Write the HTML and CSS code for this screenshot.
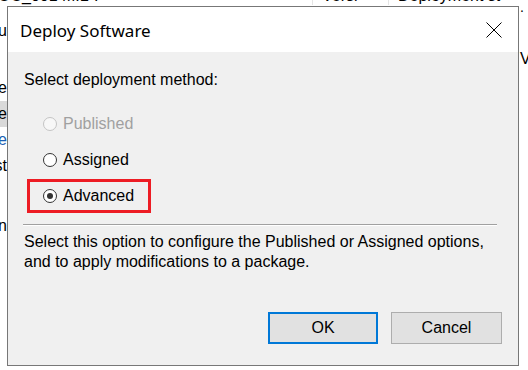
FILE: index.html
```html
<!DOCTYPE html>
<html lang="en">
<head>
    <meta charset="UTF-8">
    <meta name="viewport" content="width=device-width, initial-scale=1.0">
    <title>Deploy Software</title>
    <link rel="stylesheet" href="styles.css">
</head>
<body>
    <div class="desktop">
        <!-- the console window behind the dialog -->
        <div class="backdrop">
            <div class="back-head">
                <span class="back-name">OC_001 MIL</span>
                <span class="back-dots">.</span>
                <span class="back-col">Versi</span>
                <span class="back-col wide">Deployment st</span>
            </div>
            <div class="back-side">
                <div class="back-row" style="margin-top: 11px">Nu</div>
                <div class="back-row" style="margin-top: 31px">Locale</div>
                <div class="back-row selected">Store</div>
                <div class="back-row link">Se</div>
                <div class="back-row">Dist</div>
                <div class="back-row" style="margin-top: 34px">Un</div>
            </div>
            <div class="back-right">
                <span class="back-dot">.</span>
                <span class="back-v">V</span>
            </div>
        </div>

        <div class="dialog">
            <div class="titlebar">
                <span class="title">Deploy Software</span>
                <svg class="close" width="16" height="16" viewBox="0 0 16 16">
                    <path d="M0.5 0.5 L15.5 15.5 M15.5 0.5 L0.5 15.5" stroke="#000" stroke-width="1" fill="none"/>
                </svg>
            </div>
            <div class="content">
                <div class="prompt">Select deployment method:</div>
                <div class="options">
                    <label class="option disabled"><span class="radio"></span>Published</label>
                    <label class="option"><span class="radio"></span>Assigned</label>
                    <label class="option highlight"><span class="radio checked"></span>Advanced</label>
                </div>
                <div class="separator"></div>
                <p class="description">Select this option to configure the Published or Assigned options,<br>and to apply modifications to a package.</p>
                <div class="buttons">
                    <button class="btn default">OK</button>
                    <button class="btn">Cancel</button>
                </div>
            </div>
        </div>
    </div>
</body>
</html>
```

FILE: styles.css
```css
* {
    box-sizing: border-box;
}

body {
    margin: 0;
    background: #fff;
    font-family: "Liberation Sans", Arial, sans-serif;
    font-size: 16px;
    color: #000;
}

.desktop {
    position: relative;
    width: 528px;
    height: 370px;
    overflow: hidden;
}

/* window behind */
.backdrop {
    position: absolute;
    inset: 0;
    overflow: hidden;
}

.back-head {
    display: flex;
    align-items: flex-end;
    height: 20px;
    margin-top: -15px;
    white-space: nowrap;
}

.back-name {
    margin-left: -2px;
    width: 96px;
}

.back-dots {
    width: 218px;
}

.back-col {
    border-left: 1px solid #e5e5e5;
    padding-left: 9px;
    width: 76px;
}

.back-col.wide {
    width: 140px;
}

.back-side {
    display: flex;
    flex-direction: column;
    width: 7px;
    margin-top: 2px;
}

.back-row {
    display: flex;
    justify-content: flex-end;
    height: 26px;
    line-height: 26px;
    white-space: nowrap;
}

.back-row.selected {
    background: #d9d9d9;
}

.back-row.link {
    color: #1a5fb4;
}

.back-right {
    position: absolute;
    left: 519px;
    top: 0;
    display: flex;
    flex-direction: column;
    padding-left: 1px;
}

.back-dot {
    line-height: 14px;
    font-size: 14px;
}

.back-v {
    margin-top: 36px;
}

/* dialog */
.dialog {
    position: absolute;
    left: 7px;
    top: 6px;
    width: 512px;
    height: 360px;
    border: 1px solid #777;
    background: #f0f0f0;
    display: flex;
    flex-direction: column;
}

.titlebar {
    height: 45px;
    background: #fff;
    display: flex;
    align-items: center;
    justify-content: space-between;
    padding: 0 16px 0 12px;
}

.title {
    font-family: "Noto Sans", "Segoe UI", sans-serif;
    font-size: 17px;
    margin-top: 2px;
}

.content {
    flex: 1;
    display: flex;
    flex-direction: column;
    padding: 18px 16px 21px 16px;
    line-height: 20px;
}

.options {
    display: flex;
    flex-direction: column;
    gap: 16px;
    margin-top: 24px;
}

.option {
    display: flex;
    align-items: center;
    gap: 6px;
    padding-left: 19px;
    height: 20px;
}

.option.disabled {
    color: #a0a0a0;
}

.option.highlight {
    width: 124px;
    height: 34px;
    margin: -7px 0 -7px 3px;
    border: 3px solid #ed1c24;
    padding-left: 13px;
}

.radio {
    width: 14px;
    height: 14px;
    border: 1px solid #333;
    border-radius: 50%;
    background: #fff;
    display: flex;
    align-items: center;
    justify-content: center;
}

.option.disabled .radio {
    border-color: #c4c4c4;
    background: #f7f7f7;
}

.radio.checked::after {
    content: "";
    width: 6px;
    height: 6px;
    border-radius: 50%;
    background: #333;
}

.separator {
    margin: 18px 5px 0 -1px;
    border-top: 1px solid #a0a0a0;
    border-bottom: 1px solid #fff;
}

.description {
    margin: 6px 0 0 0;
}

.buttons {
    margin-top: auto;
    display: flex;
    justify-content: flex-end;
    gap: 13px;
}

.btn {
    width: 111px;
    height: 32px;
    font-family: "Liberation Sans", Arial, sans-serif;
    font-size: 16px;
    color: #000;
    background: #e1e1e1;
    border: 1px solid #adadad;
    padding: 0;
}

.btn.default {
    width: 110px;
    border: 1px solid #0078d7;
    box-shadow: inset 0 0 0 1px #0078d7;
}
```
